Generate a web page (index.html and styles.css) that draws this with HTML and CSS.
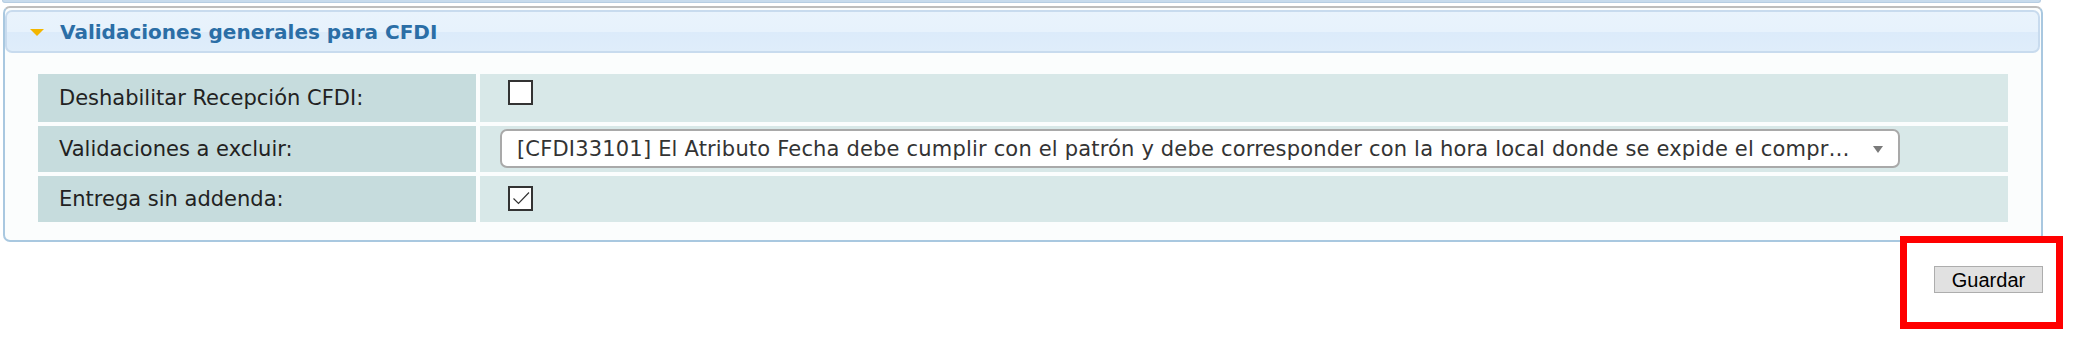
FILE: index.html
```html
<!DOCTYPE html>
<html lang="es">
<head>
<meta charset="utf-8">
<title>Validaciones generales para CFDI</title>
<link rel="stylesheet" href="styles.css">
</head>
<body>
<div class="page">
  <div class="prev-strip"></div>
  <section class="panel">
    <header class="panel-header">
      <span class="caret"></span>
      <h2 class="panel-title">Validaciones generales para CFDI</h2>
    </header>
    <div class="form-grid">
      <div class="label-cell row-1">Deshabilitar Recepción CFDI:</div>
      <div class="value-cell row-1 top-1"><span class="checkbox"></span></div>

      <div class="label-cell row-2">Validaciones a excluir:</div>
      <div class="value-cell row-2 top-2">
        <div class="select">
          <span class="select-text">[CFDI33101] El Atributo Fecha debe cumplir con el patrón y debe corresponder con la hora local donde se expide el compr…</span>
          <span class="select-arrow"></span>
        </div>
      </div>

      <div class="label-cell row-3">Entrega sin addenda:</div>
      <div class="value-cell row-3 top-3">
        <span class="checkbox">
          <svg class="check" viewBox="0 0 21 21" width="21" height="21"><path d="M3.5 10.5 L8.5 15.5 L19 4.5" fill="none" stroke="#333" stroke-width="1.2"/></svg>
        </span>
      </div>
    </div>
  </section>
  <div class="actions">
    <button class="btn" type="button">Guardar</button>
  </div>
  <div class="highlight"></div>
</div>
</body>
</html>
```

FILE: styles.css
```css
html, body {
  margin: 0;
  padding: 0;
  background: #ffffff;
}

.page {
  position: relative;
  width: 2073px;
  height: 351px;
  font-family: "DejaVu Sans", Verdana, sans-serif;
}

.prev-strip {
  margin-left: 2px;
  width: 2039px;
  height: 3px;
  background: #c7dbed;
  border: 1px solid #b6cde2;
  border-top: none;
  box-sizing: border-box;
  border-radius: 0 0 5px 5px;
}

.panel {
  margin: 3px 0 0 3px;
  width: 2040px;
  height: 236px;
  box-sizing: border-box;
  border: 2px solid #a9c8e0;
  border-top-color: #bdbdbd;
  border-radius: 7px;
  background: #fbfdfd;
  padding: 2px 0 0 0;
}

.panel-header {
  margin: 0 1px 0 0;
  height: 43px;
  box-sizing: border-box;
  border: 2px solid #c8dbee;
  border-radius: 7px;
  background: linear-gradient(#e9f3fc 0%, #e7f2fc 50%, #dcebfa 52%, #dfedfa 100%);
  display: flex;
  align-items: center;
  padding-left: 23px;
}

.caret {
  width: 0;
  height: 0;
  border-left: 7px solid transparent;
  border-right: 7px solid transparent;
  border-top: 7px solid #f3b600;
  margin-top: 1px;
}

.panel-title {
  margin: 0 0 0 16px;
  font-size: 20px;
  font-weight: bold;
  color: #2b6ea6;
  line-height: 1;
}

.form-grid {
  margin: 21px 33px 0 33px;
  display: grid;
  grid-template-columns: 438px 1528px;
  grid-template-rows: 48px 46px 46px;
  column-gap: 4px;
  row-gap: 4px;
}

.label-cell {
  background: #c6dcdd;
  color: #222;
  font-size: 21px;
  display: flex;
  align-items: center;
  padding-left: 21px;
}

.value-cell {
  background: #d8e8e8;
  display: flex;
  align-items: flex-start;
}

.top-1 { padding: 6px 0 0 28px; }
.top-2 { padding: 3px 0 0 20px; }
.top-3 { padding: 10px 0 0 28px; }

.checkbox {
  width: 25px;
  height: 25px;
  box-sizing: border-box;
  border: 2px solid #333;
  background: #fff;
  display: block;
  position: relative;
}

.check {
  display: block;
}

.select {
  width: 1400px;
  height: 39px;
  box-sizing: border-box;
  border: 2px solid #a9a9a9;
  border-radius: 7px;
  background: #fff;
  display: flex;
  align-items: center;
  justify-content: space-between;
  padding: 0 15px 0 15px;
}

.select-text {
  white-space: nowrap;
  font-size: 21px;
  letter-spacing: 0.18px;
  color: #333;
}

.select-arrow {
  flex: none;
  width: 0;
  height: 0;
  margin-top: 2px;
  border-left: 5px solid transparent;
  border-right: 5px solid transparent;
  border-top: 7px solid #7a7a7a;
}

.actions {
  width: 2043px;
  display: flex;
  justify-content: flex-end;
  padding-top: 24px;
}

.btn {
  width: 109px;
  height: 27px;
  box-sizing: border-box;
  margin: 0;
  padding: 0;
  border: 1px solid #adadad;
  background: #e1e1e1;
  font-family: "Liberation Sans", Arial, sans-serif;
  font-size: 20px;
  color: #000;
  line-height: 1;
}

.highlight {
  position: absolute;
  left: 1900px;
  top: 236px;
  width: 163px;
  height: 93px;
  box-sizing: border-box;
  border: 7px solid #ff0000;
  pointer-events: none;
}
```
